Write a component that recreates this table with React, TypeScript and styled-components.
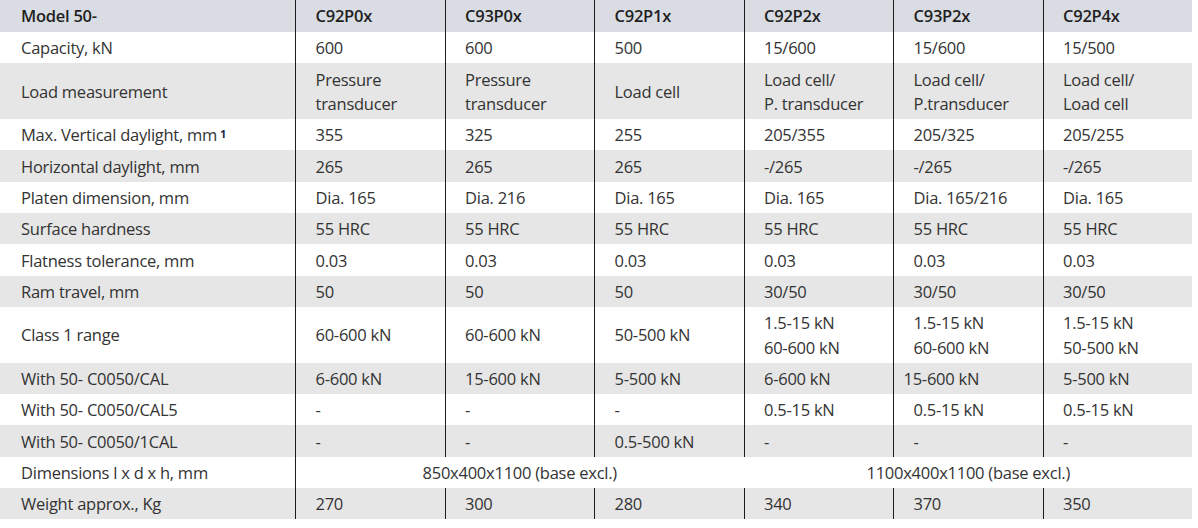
import React from 'react';
import styled, { createGlobalStyle } from 'styled-components';

const GlobalStyle = createGlobalStyle`
  html, body {
    margin: 0;
    padding: 0;
    background: #fff;
  }
  body {
    font-family: "Open Sans", "Noto Sans", "Liberation Sans", sans-serif;
    -webkit-font-smoothing: antialiased;
  }
`;

const MODELS = ['C92P0x', 'C93P0x', 'C92P1x', 'C92P2x', 'C93P2x', 'C92P4x'];

type Value = string | { text: string; nudge: number };

type Spec = {
  label: string;
  note?: string;
  values?: Value[];
  spans?: string[];
};

const ROWS: Spec[] = [
  { label: 'Capacity, kN', values: ['600', '600', '500', '15/600', '15/600', '15/500'] },
  {
    label: 'Load measurement',
    values: [
      'Pressure\ntransducer',
      'Pressure\ntransducer',
      'Load cell',
      'Load cell/\nP. transducer',
      'Load cell/\nP.transducer',
      'Load cell/\nLoad cell',
    ],
  },
  {
    label: 'Max. Vertical daylight, mm',
    note: '1',
    values: ['355', '325', '255', '205/355', '205/325', '205/255'],
  },
  { label: 'Horizontal daylight, mm', values: ['265', '265', '265', '-/265', '-/265', '-/265'] },
  {
    label: 'Platen dimension, mm',
    values: ['Dia. 165', 'Dia. 216', 'Dia. 165', 'Dia. 165', 'Dia. 165/216', 'Dia. 165'],
  },
  { label: 'Surface hardness', values: Array(6).fill('55 HRC') },
  { label: 'Flatness tolerance, mm', values: Array(6).fill('0.03') },
  { label: 'Ram travel, mm', values: ['50', '50', '50', '30/50', '30/50', '30/50'] },
  {
    label: 'Class 1 range',
    values: [
      '60-600 kN',
      '60-600 kN',
      '50-500 kN',
      '1.5-15 kN\n60-600 kN',
      '1.5-15 kN\n60-600 kN',
      '1.5-15 kN\n50-500 kN',
    ],
  },
  {
    label: 'With 50- C0050/CAL',
    values: ['6-600 kN', '15-600 kN', '5-500 kN', '6-600 kN', { text: '15-600 kN', nudge: -10 }, '5-500 kN'],
  },
  { label: 'With 50- C0050/CAL5', values: ['-', '-', '-', '0.5-15 kN', '0.5-15 kN', '0.5-15 kN'] },
  { label: 'With 50- C0050/1CAL', values: ['-', '-', '0.5-500 kN', '-', '-', '-'] },
  {
    label: 'Dimensions l x d x h, mm',
    spans: ['850x400x1100 (base excl.)', '1100x400x1100 (base excl.)'],
  },
  { label: 'Weight approx., Kg', values: ['270', '300', '280', '340', '370', '350'] },
];

const Sheet = styled.div`
  width: 1192px;
  font-size: 16.5px;
  letter-spacing: -0.25px;
  line-height: 24.5px;
`;

const Row = styled.div<{ $tone: 'head' | 'light' | 'shade' }>`
  display: grid;
  grid-template-columns: 295px repeat(6, 149.5px);
  background: ${({ $tone }) =>
    $tone === 'head' ? '#d9dde3' : $tone === 'shade' ? '#e6e6e6' : '#ffffff'};
`;

const Cell = styled.div<{ $head?: boolean; $rule?: boolean; $span?: number; $center?: boolean }>`
  display: flex;
  align-items: center;
  justify-content: ${({ $center }) => ($center ? 'center' : 'flex-start')};
  grid-column: ${({ $span }) => ($span ? `span ${$span}` : 'auto')};
  box-sizing: border-box;
  padding: ${({ $head }) => ($head ? '3.5px 0 4px' : '4.3px 0 2.5px')};
  padding-left: ${({ $center }) => ($center ? '0' : '19.5px')};
  border-left: ${({ $rule }) => ($rule ? '1px solid #1c1c1c' : '1px solid transparent')};
  font-weight: ${({ $head }) => ($head ? 600 : 400)};
  color: ${({ $head }) => ($head ? '#1f1f1f' : '#333333')};
  white-space: pre-line;
`;

const Label = styled(Cell)`
  padding-left: 21px;
  border-left: none;
`;

const Nudge = styled.span`
  position: relative;
`;

const Note = styled.sup`
  font-size: 11px;
  font-weight: 700;
  color: #1b2748;
  line-height: 0;
  margin-left: 3px;
  position: relative;
  top: -1.5px;
`;

function renderValue(v: Value) {
  if (typeof v === 'string') return v;
  return <Nudge style={{ left: v.nudge }}>{v.text}</Nudge>;
}

export default function App() {
  return (
    <>
      <GlobalStyle />
      <Sheet>
        <Row $tone="head">
          <Label $head>Model 50-</Label>
          {MODELS.map((m) => (
            <Cell key={m} $head $rule>
              {m}
            </Cell>
          ))}
        </Row>
        {ROWS.map((r, i) => (
          <Row key={r.label} $tone={i % 2 === 0 ? 'light' : 'shade'}>
            <Label>
              {r.label}
              {r.note && <Note>{r.note}</Note>}
            </Label>
            {r.values &&
              r.values.map((v, j) => (
                <Cell key={j} $rule>
                  {renderValue(v)}
                </Cell>
              ))}
            {r.spans &&
              r.spans.map((s, j) => (
                <Cell key={j} $span={3} $center $rule={j === 0}>
                  {s}
                </Cell>
              ))}
          </Row>
        ))}
      </Sheet>
    </>
  );
}
